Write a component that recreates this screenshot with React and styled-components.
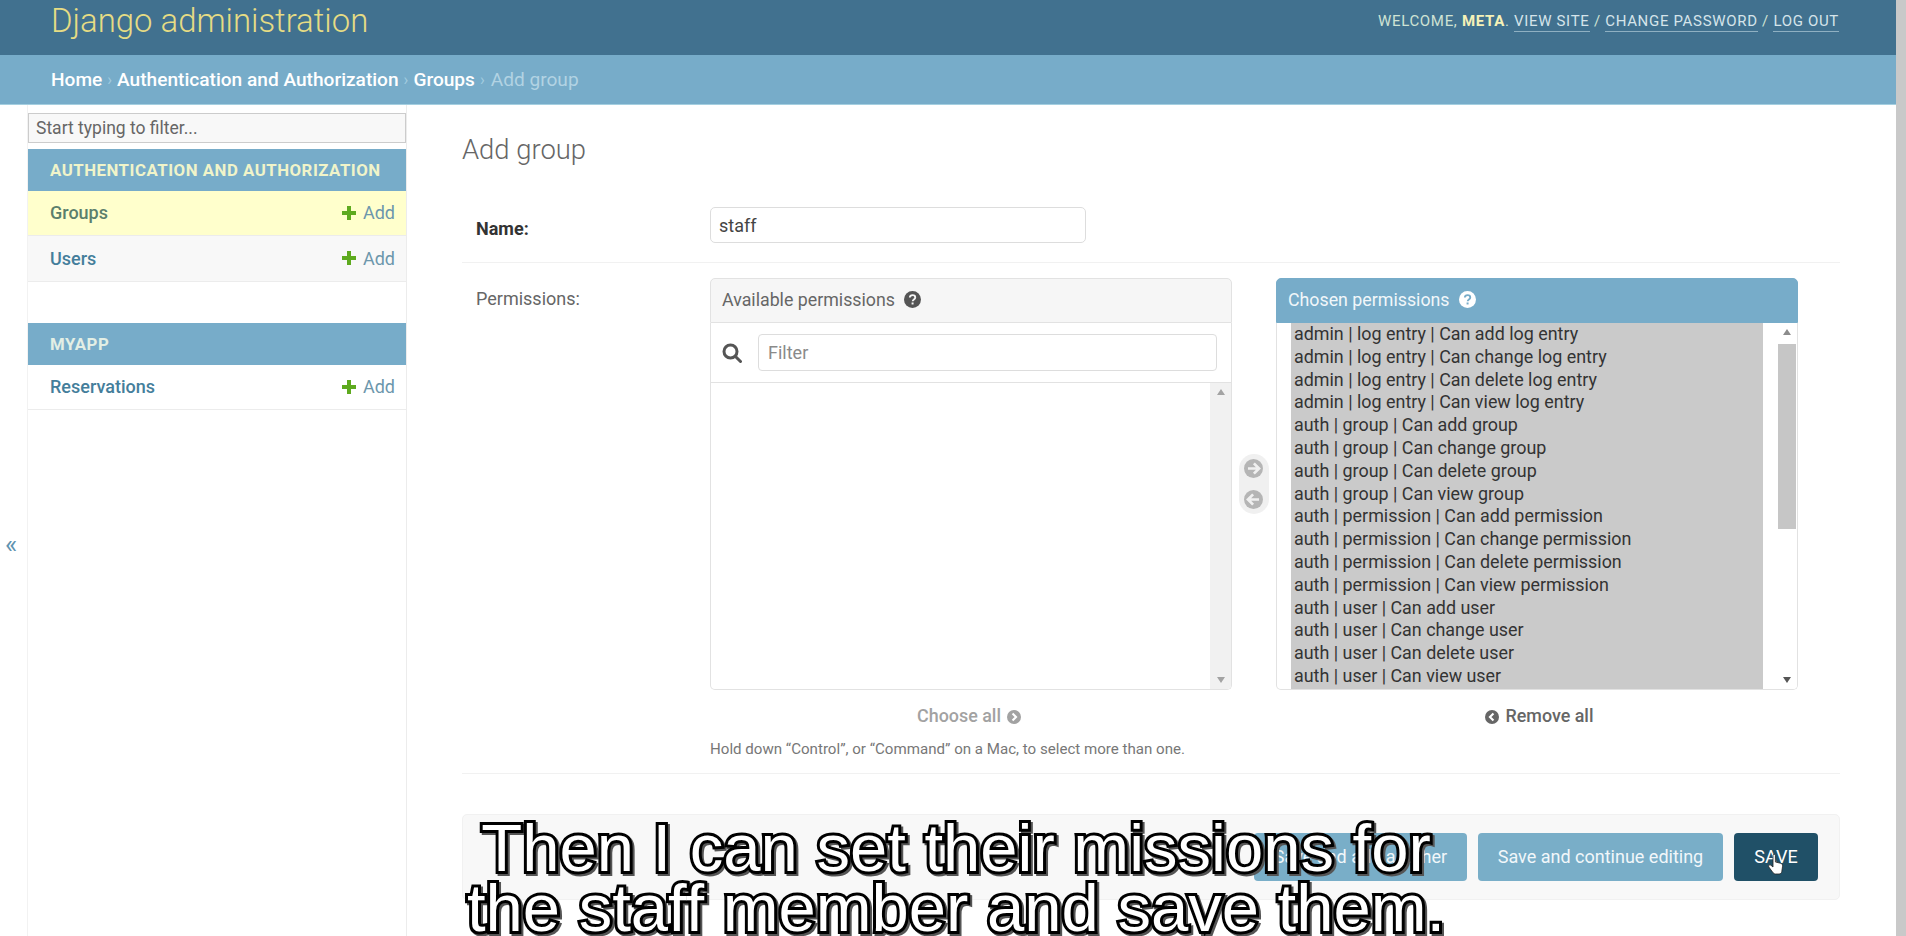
import React from "react";
import styled, { createGlobalStyle } from "styled-components";

const Global = createGlobalStyle`
  html, body { margin: 0; padding: 0; height: 100%; overflow: hidden; background: #fff; }
  body { font-family: Roboto, "Liberation Sans", sans-serif; color: #333; }
  * { box-sizing: border-box; }
`;

const Page = styled.div`display: flex; width: 1906px; height: 936px; position: relative; overflow: hidden;`;
const Viewport = styled.div`flex: 1; min-width: 0; display: flex; flex-direction: column;`;
const PageScrollbar = styled.div`width: 10px; background: #c9c9c9;`;

const Header = styled.header`
  height: 55px; flex: none; background: #41718f; display: flex; align-items: center;
  justify-content: space-between; padding: 0 57px 0 51px;
`;
const Brand = styled.h1`
  margin: -13px 0 0; font-size: 32.9px; font-weight: 300; color: #e6dc84; line-height: 40px;
`;
const UserTools = styled.div`
  margin-top: -13px; font-size: 15px; letter-spacing: 0.68px; text-transform: uppercase; color: #cfe3d4;
  font-weight: 400; white-space: nowrap;
  strong { color: #f5f1b8; font-weight: 700; }
`;
const ToolLink = styled.span`color: #d5e4ea; border-bottom: 1px solid #8fb0c2; padding-bottom: 1px;`;

const Crumbs = styled.nav`
  height: 50px; flex: none; background: #77acc9; border-bottom: 1px solid #a5cfe0; display: flex; align-items: center;
  padding-left: 51px; font-size: 19.1px; font-weight: 500; color: #fff; white-space: nowrap;
`;
const CrumbSep = styled.span`color: #a3cde0; margin: 0 5px; font-size: 16px; font-weight: 400;`;
const CrumbCurrent = styled.span`color: #b2d3e3; font-weight: 400; margin-left: 1px;`;

const Body = styled.div`flex: 1; min-height: 0; display: flex;`;
const Toggle = styled.div`
  width: 27px; flex: none; display: flex; align-items: center; justify-content: center;
  padding-top: 46px; padding-right: 5px; font-size: 26px; color: #5f93b0;
`;
const Sidebar = styled.aside`
  width: 380px; flex: none; border-left: 1px solid #f2f2f2; border-right: 1px solid #ececec; padding-top: 8px;
`;
const SideFilter = styled.div`
  height: 30px; margin-bottom: 6px; border: 1px solid #ccc; background: #f8f8f8; color: #666; font-size: 17.5px;
  padding-left: 7px; display: flex; align-items: center;
`;
const AppCaption = styled.div`
  height: ${p => p.$h}px; margin-top: ${p => p.$top || 0}px; background: #77acc9; display: flex; align-items: center; padding-left: 22px;
  font-size: 16.8px; font-weight: 700; letter-spacing: 0.52px; color: ${p => p.$light ? "#e3efe5" : "#f0f4c9"}; text-transform: uppercase;
`;
const ModelRow = styled.div`
  height: ${p => p.$h}px; display: flex; align-items: center; justify-content: space-between; padding: 0 11px 1px 22px;
  background: ${p => p.$bg}; border-bottom: 1px solid #ececec; font-size: 18px;
`;
const ModelName = styled.span`font-weight: 500; color: ${p => p.$active ? "#5b7f6c" : "#447e9b"};`;
const AddLink = styled.span`display: flex; align-items: center; gap: 6px; color: #6d97ac; font-weight: 400;`;

const Content = styled.main`flex: 1; min-width: 0; padding: 0 56px 0 55px;`;
const Title = styled.h2`
  margin: 0; padding-top: 28px; height: 89px; line-height: 34px; font-size: 27.4px; font-weight: 300; color: #666;
`;
const FormRow = styled.div`display: flex; padding: 0 0 0 14px; border-bottom: 1px solid #f1f1f1;`;
const NameRow = styled(FormRow)`height: 69px; padding-top: 13px;`;
const PermRow = styled(FormRow)`height: 511px; padding-top: 15px;`;
const Label = styled.label`
  width: 234px; flex: none; font-size: 18px; color: ${p => p.$strong ? "#333" : "#666"}; font-weight: ${p => p.$strong ? 700 : 400};
  padding-top: ${p => p.$top}px; line-height: 20px;
`;
const NameInput = styled.div`
  width: 376px; height: 36px; border: 1px solid #ddd; border-radius: 5px; padding-left: 8px; display: flex; align-items: center;
  font-size: 18px; color: #444;
`;
const Selector = styled.div`display: flex; align-items: flex-start;`;
const SelectorCol = styled.div`width: 522px; display: flex; flex-direction: column;`;
const BoxHead = styled.div`
  height: 45px; display: flex; align-items: center; gap: 9px; padding: 0 0 2px 11px; font-size: 17.8px; border: 1px solid #e2e2e2; border-radius: 5px 5px 0 0;
  background: ${p => p.$blue ? "#77acc9" : "#f6f6f6"}; color: ${p => p.$blue ? "#f1f7fa" : "#666"}; border-color: ${p => p.$blue ? "#77acc9" : "#e2e2e2"};
`;
const FilterRow = styled.div`
  height: 60px; display: flex; align-items: center; gap: 16px; padding: 0 14px 0 11px; border: 1px solid #e2e2e2; border-top: 0;
`;
const FilterInput = styled.div`
  flex: 1; height: 37px; border: 1px solid #ddd; border-radius: 4px; color: #8a8a8a; font-size: 18px; padding-left: 9px; display: flex; align-items: center;
`;
const ListBox = styled.div`
  height: ${p => p.$h}px; display: flex; border: 1px solid #e2e2e2; border-top: 0; border-radius: 0 0 5px 5px;
  padding-left: ${p => p.$pad}px; overflow: hidden;
`;
const ListArea = styled.div`flex: 1; min-width: 0;`;
const Selected = styled.div`background: #cacaca; height: 100%; width: 472px; padding: 0 0 0 3px;`;
const Opt = styled.div`height: 22.8px; line-height: 21px; font-size: 17.9px; color: #333; white-space: nowrap;`;
const Track = styled.div`width: 21px; flex: none; background: ${p => p.$dark ? "#fff" : "#f1f1f1"}; display: flex; flex-direction: column; align-items: center; justify-content: space-between; padding: 6px 0;`;
const ThumbWrap = styled.div`flex: 1; width: 18px; margin: 9px 0 4px; `;
const Thumb = styled.div`width: 100%; height: 185px; background: #c6c6c6;`;
const Arrow = styled.div`
  width: 0; height: 0; border-left: 4.5px solid transparent; border-right: 4.5px solid transparent;
  ${p => p.$down ? `border-top: 6px solid ${p.$c};` : `border-bottom: 6px solid ${p.$c};`}
`;
const MoveCol = styled.div`width: 44px; flex: none; display: flex; justify-content: center; padding-top: 176px; padding-right: 1px;`;
const MovePill = styled.div`
  width: 30px; height: 60px; border-radius: 15px; background: #f0f0f0; display: flex; flex-direction: column; align-items: center; justify-content: space-between; padding: 5px 0;
`;
const AllLink = styled.div`
  height: 51px; display: flex; align-items: center; justify-content: center; gap: 6px; font-size: 17.9px; font-weight: 500;
  color: ${p => p.$off ? "#a2a2a2" : "#666"}; padding-left: ${p => p.$pl || 0}px; padding-right: ${p => p.$pr || 0}px;
`;
const Help = styled.div`font-size: 15.1px; color: #777; line-height: 20px; margin-top: -2px;`;

const Submit = styled.div`
  margin-top: 40px; height: 86px; background: #f8f8f8; border: 1px solid #f1f1f1; border-radius: 5px; display: flex; align-items: center;
  justify-content: flex-end; gap: 11px; padding: 0 21px 0 0;
`;
const Btn = styled.div`
  height: 48px; width: ${p => p.$w}px; border-radius: 4px; display: flex; align-items: center; justify-content: center; color: ${p => p.$primary ? "#fff" : "#f1f7fa"}; position: relative;
  background: ${p => p.$primary ? "#205067" : "#79aec8"}; font-size: 18px; font-weight: 400; padding-bottom: 1px;
`;
const Hand = styled.svg`position: absolute; left: 33px; top: 20px;`;

const Subtitle = styled.div`
  position: absolute; left: 0; width: 1912px; text-align: center; top: 818px; font-family: "Liberation Sans", Arial, sans-serif;
  font-size: 67px; line-height: 60px; color: #fff; white-space: nowrap; pointer-events: none;
  -webkit-text-stroke: 6px #000; paint-order: stroke fill; letter-spacing: 0;
  filter: drop-shadow(2px 2px 0 #555);
`;
const SubLine = styled.div``;

const HelpIcon = ({ c, fg }) => (
  <svg width="17" height="17" viewBox="0 0 24 24">
    <circle cx="12" cy="12" r="12" fill={c} />
    <path d="M8.2 9.2c.2-2.2 1.8-3.4 3.9-3.4 2.2 0 3.8 1.3 3.8 3.2 0 2.8-3.6 2.9-3.6 5.4" fill="none" stroke={fg} strokeWidth="2.6" />
    <rect x="10.7" y="16.2" width="2.8" height="2.8" fill={fg} />
  </svg>
);
const Plus = () => (
  <svg width="16" height="16" viewBox="0 0 16 16"><path d="M6 1h4v5h5v4h-5v5H6v-5H1V6h5z" fill="#5eaa1f" /></svg>
);
const SearchIcon = () => (
  <svg width="20" height="20" viewBox="0 0 20 20" fill="none" stroke="#555" strokeWidth="3">
    <circle cx="8.5" cy="8.5" r="6.5" /><path d="M13.5 13.5l5 5" strokeLinecap="round" />
  </svg>
);
const CircleArrow = ({ dir, size, bg, fg = "#f0f0f0" }) => (
  <svg width={size} height={size} viewBox="0 0 24 24">
    <circle cx="12" cy="12" r="12" fill={bg} />
    {dir === "right"
      ? <path d="M12.5 5.5l6.5 6.5-6.5 6.5M5 12h13" fill="none" stroke={fg} strokeWidth="3.4" />
      : <path d="M11.5 5.5L5 12l6.5 6.5M19 12H6" fill="none" stroke={fg} strokeWidth="3.4" />}
  </svg>
);
const Chevron = ({ dir, c }) => (
  <svg width="14" height="14" viewBox="0 0 24 24" style={{ marginTop: 3 }}>
    <circle cx="12" cy="12" r="12" fill={c} />
    <path d={dir === "right" ? "M9.5 6l6 6-6 6" : "M14.5 6l-6 6 6 6"} fill="none" stroke="#fff" strokeWidth="3.6" />
  </svg>
);

const options = [
  "admin | log entry | Can add log entry", "admin | log entry | Can change log entry", "admin | log entry | Can delete log entry", "admin | log entry | Can view log entry",
  "auth | group | Can add group", "auth | group | Can change group", "auth | group | Can delete group", "auth | group | Can view group",
  "auth | permission | Can add permission", "auth | permission | Can change permission", "auth | permission | Can delete permission", "auth | permission | Can view permission",
  "auth | user | Can add user", "auth | user | Can change user", "auth | user | Can delete user", "auth | user | Can view user",
];

export default function App() {
  return (
    <Page>
      <Global />
      <Viewport>
        <Header>
          <Brand>Django administration</Brand>
          <UserTools>
            Welcome, <strong>meta</strong>. <ToolLink>View site</ToolLink> / <ToolLink>Change password</ToolLink> / <ToolLink>Log out</ToolLink>
          </UserTools>
        </Header>
        <Crumbs>
          Home<CrumbSep>›</CrumbSep>Authentication and Authorization<CrumbSep>›</CrumbSep>Groups<CrumbSep>›</CrumbSep><CrumbCurrent>Add group</CrumbCurrent>
        </Crumbs>
        <Body>
          <Toggle>«</Toggle>
          <Sidebar>
            <SideFilter>Start typing to filter...</SideFilter>
            <AppCaption $h={42}>Authentication and Authorization</AppCaption>
            <ModelRow $h={45} $bg="#ffffcc"><ModelName $active>Groups</ModelName><AddLink><Plus />Add</AddLink></ModelRow>
            <ModelRow $h={46} $bg="#f8f8f8"><ModelName>Users</ModelName><AddLink><Plus />Add</AddLink></ModelRow>
            <AppCaption $h={42} $top={41} $light>myapp</AppCaption>
            <ModelRow $h={45} $bg="#fff"><ModelName>Reservations</ModelName><AddLink><Plus />Add</AddLink></ModelRow>
          </Sidebar>
          <Content>
            <Title>Add group</Title>
            <NameRow>
              <Label $strong $top={12}>Name:</Label>
              <NameInput>staff</NameInput>
            </NameRow>
            <PermRow>
              <Label $top={11}>Permissions:</Label>
              <div>
                <Selector>
                  <SelectorCol>
                    <BoxHead>Available permissions <HelpIcon c="#555" fg="#f6f6f6" /></BoxHead>
                    <FilterRow><SearchIcon /><FilterInput>Filter</FilterInput></FilterRow>
                    <ListBox $h={307} $pad={0}>
                      <ListArea />
                      <Track><Arrow $c="#a3a3a3" /><Arrow $down $c="#a3a3a3" /></Track>
                    </ListBox>
                    <AllLink $off $pr={4}>Choose all <Chevron dir="right" c="#a2a2a2" /></AllLink>
                  </SelectorCol>
                  <MoveCol>
                    <MovePill>
                      <CircleArrow dir="right" size={19} bg="#b5b5b5" />
                      <CircleArrow dir="left" size={19} bg="#b5b5b5" />
                    </MovePill>
                  </MoveCol>
                  <SelectorCol>
                    <BoxHead $blue>Chosen permissions <HelpIcon c="#fff" fg="#77acc9" /></BoxHead>
                    <ListBox $h={367} $pad={14}>
                      <ListArea>
                        <Selected>{options.map(o => <Opt key={o}>{o}</Opt>)}</Selected>
                      </ListArea>
                      <Track $dark>
                        <Arrow $c="#8c8c8c" />
                        <ThumbWrap><Thumb /></ThumbWrap>
                        <Arrow $down $c="#555" />
                      </Track>
                    </ListBox>
                    <AllLink $pl={5}><Chevron dir="left" c="#666" />Remove all</AllLink>
                  </SelectorCol>
                </Selector>
                <Help>Hold down “Control”, or “Command” on a Mac, to select more than one.</Help>
              </div>
            </PermRow>
            <Submit>
              <Btn $w={213}>Save and add another</Btn>
              <Btn $w={245}>Save and continue editing</Btn>
              <Btn $w={84} $primary>SAVE
                <Hand width="18" height="24" viewBox="0 0 18 24">
                  <path d="M6 2.5c0-1.6 2.4-1.6 2.4 0V9l5 1.2c1.6.4 2.4 1.4 2.2 3l-.8 5.3c-.2 1.4-1.2 2.5-2.7 2.5H8.5c-1 0-1.8-.4-2.4-1.2L1.8 14c-1-1.4.8-3 2.1-1.8L6 14z" fill="#fff" stroke="#222" strokeWidth="0.8" />
                </Hand>
              </Btn>
            </Submit>
          </Content>
        </Body>
      </Viewport>
      <PageScrollbar />
      <Subtitle>
        <SubLine>Then I can set their missions for</SubLine>
        <SubLine>the staff member and save them.</SubLine>
      </Subtitle>
    </Page>
  );
}
